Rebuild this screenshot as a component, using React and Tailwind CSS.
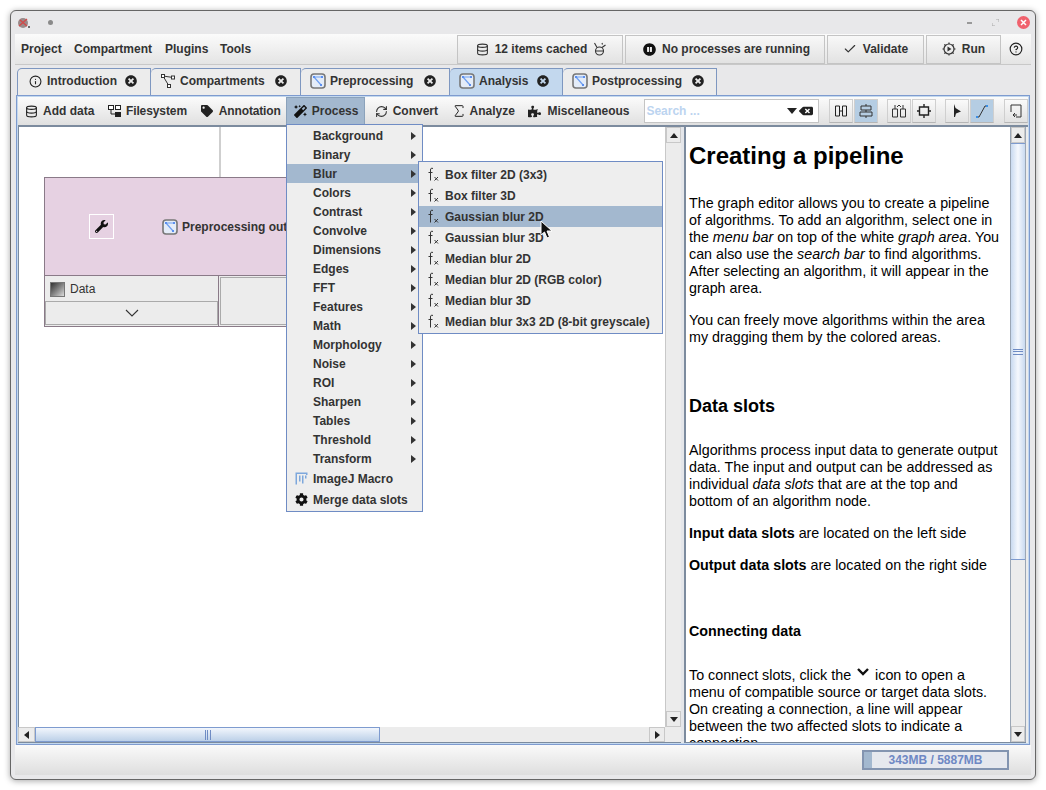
import { Database, RefreshCw, Sigma, Check, CircleHelp, Info } from "lucide-react"
import { FaMagic, FaTag, FaPuzzlePiece, FaCog, FaWrench, FaTimesCircle, FaPauseCircle, FaBackspace } from "react-icons/fa"

const font = { fontFamily: '"Liberation Sans", Arial, sans-serif' }

const PipelineIcon = ({ size = 16 }) => (
    <svg width={size} height={size} viewBox="0 0 16 16" className="shrink-0">
        <rect x="1" y="1" width="14" height="14" rx="3" fill="#e4ecf8" stroke="#777" strokeWidth="1.6" />
        <path d="M4 4 L12 4 M4 4 L11 12" fill="none" stroke="#6f9ff0" strokeWidth="1.2" />
        <rect x="3" y="3" width="2" height="2" fill="#5b8ff0" />
        <rect x="11" y="3" width="2" height="2" fill="#5b8ff0" />
        <rect x="10" y="11" width="2" height="2" fill="#5b8ff0" />
    </svg>
)

const CompartmentsIcon = () => (
    <svg width="14" height="14" viewBox="0 0 14 14" className="shrink-0">
        <path d="M2 2 L12 3.5 M2 2 L8 12" stroke="#333" strokeWidth="1" fill="none" />
        <rect x="0.5" y="0.5" width="3" height="3" fill="#fff" stroke="#333" />
        <rect x="10.5" y="2" width="3" height="3" fill="#fff" stroke="#333" />
        <rect x="6.5" y="10.5" width="3" height="3" fill="#fff" stroke="#333" />
    </svg>
)

const FilesystemIcon = () => (
    <svg width="13" height="13" viewBox="0 0 13 13" className="shrink-0">
        <rect x="0.5" y="0.5" width="5" height="4" fill="#fff" stroke="#222" />
        <rect x="7.5" y="0.5" width="5" height="4" fill="#fff" stroke="#222" />
        <path d="M3 5 V9 H7" fill="none" stroke="#222" />
        <rect x="7" y="7" width="6" height="5" fill="#222" />
    </svg>
)

const RunIcon = () => (
    <svg width="14" height="14" viewBox="0 0 14 14" className="shrink-0">
        <circle cx="7" cy="7" r="5" fill="none" stroke="#333" strokeWidth="1.2" />
        <path d="M7 0.5 V2 M7 12 V13.5 M0.5 7 H2 M12 7 H13.5 M2.4 2.4 L3.5 3.5 M10.5 10.5 L11.6 11.6 M2.4 11.6 L3.5 10.5 M10.5 3.5 L11.6 2.4" stroke="#333" strokeWidth="1.2" />
        <path d="M5.5 4.5 L9.5 7 L5.5 9.5 Z" fill="#333" />
    </svg>
)

// the little "cache" glyph next to the items count
const CacheIcon = () => (
    <svg width="14" height="14" viewBox="0 0 14 14" className="shrink-0">
        <circle cx="6.5" cy="9" r="4" fill="none" stroke="#333" strokeWidth="1.1" />
        <path d="M3 9 H10 M4 5.5 L1.5 1 M9 5.5 L12.5 3 M9 1 L9.5 2.5" fill="none" stroke="#333" strokeWidth="1.1" />
    </svg>
)

const FxIcon = () => (
    <svg width="12" height="15" viewBox="0 0 12 15" className="shrink-0">
        <path d="M6 1.5 C4.5 0.8 3.5 1.3 3.5 3 L3.5 13.5 M1.5 5.5 H5.5" fill="none" stroke="#333" strokeWidth="1" />
        <path d="M7.5 10 L11 13.5 M11 10 L7.5 13.5" stroke="#333" strokeWidth="1" />
    </svg>
)

const ImageJIcon = () => (
    <svg width="13" height="13" viewBox="0 0 13 13" className="shrink-0">
        <path d="M0.5 0.5 H12.5 V3 H11 V2 H2 V12.5 H0.5 Z" fill="#7da7dc" />
        <rect x="4" y="3.5" width="1.5" height="6" fill="#7da7dc" />
        <rect x="7" y="3.5" width="1.5" height="8" fill="#7da7dc" />
        <rect x="10" y="3.5" width="1.5" height="3" fill="#7da7dc" />
    </svg>
)

// small toolbar glyphs, drawn to fit the 24px square buttons
const layoutIcons = [
    <path key="a" d="M2.5 3 H6.5 V13 H2.5 Z M9.5 3 H13.5 V13 H9.5 Z M6.5 8 H9.5" fill="none" stroke="#222" />,
    <path key="b" d="M3 3 H13 V7 H3 Z M2 9 H14 V13 H2 Z M8 1 V3 M8 7 V9 M8 13 V15" fill="none" stroke="#333" />,
    <path key="c" d="M1.5 6 H6.5 V14 H1.5 Z M9.5 6 H14.5 V14 H9.5 Z M4 6 V2 M12 6 V2 M6 4 L8 2 L10 4" fill="none" stroke="#333" />,
    <path key="d" d="M3.5 4 H12.5 V12 H3.5 Z M8 1 V4 M8 12 V15 M1 8 H3.5 M12.5 8 H15" fill="none" stroke="#222" strokeWidth="1.4" />,
    <path key="e" d="M5 1 L6.5 5 L12 8.5 L7 10.5 L6 14 L5 14 Z" fill="#222" />,
    <g key="f"><path d="M3 14 H5 L11 3 H13" fill="none" stroke="#333" /><rect x="2" y="13" width="2" height="2" fill="#3a8fe8" /><rect x="12" y="2" width="2" height="2" fill="#3a8fe8" /></g>,
    <path key="g" d="M3 2 H13 V14 H8 M3 2 V9 M5 12 H9 M5 12 L7 10 M5 12 L7 14" fill="none" stroke="#333" />,
]

const IconButton = ({ idx, active, className = "" }) => (
    <div className={`w-[24px] h-[24px] flex items-center justify-center border border-[#cfcfcf] border-b-[#b5b5b5] ${active ? "bg-[#b5cde3]" : "bg-linear-to-b from-[#fafafa] to-[#e2e2e2]"} ${className}`}>
        <svg width="16" height="16" viewBox="0 0 16 16">{layoutIcons[idx]}</svg>
    </div>
)

const TopButton = ({ width, children }) => (
    <div className={`${width} h-[29px] flex items-center justify-center gap-[6px] border border-[#c4c4c4] bg-linear-to-b from-[#f8f8f8] to-[#e2e2e2] text-[12px] font-bold text-[#333]`}>
        {children}
    </div>
)

const tabs = [
    { name: "Introduction", w: "w-[134px]", icon: <Info size={13} color="#222" />, pl: "pl-[11px]", gap: "gap-[5px]", closeMl: "ml-[3px]" },
    { name: "Compartments", w: "w-[150px]", icon: <CompartmentsIcon />, pl: "pl-[10px]", gap: "gap-[5px]", closeMl: "ml-[5px]" },
    { name: "Preprocessing", w: "w-[149px]", icon: <PipelineIcon />, pl: "pl-[9px]", gap: "gap-[4px]", closeMl: "ml-[7px]" },
    { name: "Analysis", w: "w-[113px]", icon: <PipelineIcon />, pl: "pl-[9px]", gap: "gap-[4px]", closeMl: "ml-[5px]", active: true },
    { name: "Postprocessing", w: "w-[154px]", icon: <PipelineIcon />, pl: "pl-[9px]", gap: "gap-[4px]", closeMl: "ml-[6px]" },
]

const toolbarItems = [
    { name: "Add data", cls: "w-[83px] pl-[6px] gap-[5px]", icon: <Database size={13} color="#222" /> },
    { name: "Filesystem", cls: "w-[93px] pl-[6px] gap-[5px] tracking-[-0.1px]", icon: <FilesystemIcon /> },
    { name: "Annotation", cls: "w-[91px] pl-[6px] gap-[6px] tracking-[-0.15px]", icon: <FaTag size={12} color="#222" /> },
    { name: "Process", cls: "w-[79px] pl-[7px] gap-[5px] pb-[1px]", icon: <FaMagic size={13} color="#111" />, active: true },
    { name: "Convert", cls: "w-[81px] pl-[10px] gap-[5px]", icon: <RefreshCw size={13} color="#333" /> },
    { name: "Analyze", cls: "w-[76px] pl-[5px] gap-[3px]", icon: <Sigma size={16} color="#222" strokeWidth={1.5} /> },
    { name: "Miscellaneous", cls: "w-[121px] pl-[6px] gap-[7px]", icon: <FaPuzzlePiece size={13} color="#222" /> },
]

const processMenu = ["Background", "Binary", "Blur", "Colors", "Contrast", "Convolve", "Dimensions", "Edges", "FFT", "Features", "Math", "Morphology", "Noise", "ROI", "Sharpen", "Tables", "Threshold", "Transform"]
const blurMenu = ["Box filter 2D (3x3)", "Box filter 3D", "Gaussian blur 2D", "Gaussian blur 3D", "Median blur 2D", "Median blur 2D (RGB color)", "Median blur 3D", "Median blur 3x3 2D (8-bit greyscale)"]

const Arrow = ({ dir }) => {
    const d = { up: "M0 5 L4 0 L8 5 Z", down: "M0 0 L8 0 L4 5 Z", left: "M5 0 L5 8 L0 4 Z", right: "M0 0 L0 8 L5 4 Z" }[dir]
    const horizontal = dir === "left" || dir === "right"
    return (
        <svg width={horizontal ? 5 : 8} height={horizontal ? 8 : 5} viewBox={horizontal ? "0 0 5 8" : "0 0 8 5"} className="shrink-0">
            <path d={d} fill="#222" />
        </svg>
    )
}

const ScrollBtn = ({ dir, className = "" }) => (
    <div className={`flex items-center justify-center bg-[#ececec] border border-[#c8c8c8] ${className}`}>
        <Arrow dir={dir} />
    </div>
)

const App = () => {
    return (
        <div className="relative w-[1046px] h-[790px] bg-white p-[10px]" style={font}>
            <div className="w-[1026px] h-[770px] flex flex-col rounded-[6px] border border-[#666] bg-[#e8e8ea] shadow-[0_1px_6px_rgba(0,0,0,0.35)] px-[4px] pb-[4px]">

                {/* title bar */}
                <div className="h-[23px] shrink-0 flex items-center relative">
                    <svg width="14" height="14" viewBox="0 0 14 14" className="ml-[2px]">
                        <circle cx="6" cy="7" r="5" fill="#9a8a8a" />
                        <path d="M2 10 L10 3 M3 4 L10 10" stroke="#d24a4a" strokeWidth="1.4" />
                        <circle cx="12" cy="11" r="1" fill="#444" />
                    </svg>
                    <div className="ml-[17px] w-[5px] h-[5px] rounded-full bg-[#8a8a8a]" />
                    <div className="ml-auto flex items-center">
                        <div className="w-[5px] h-[2px] bg-[#999]" />
                        <svg width="7" height="7" viewBox="0 0 7 7" className="ml-[20px]">
                            <path d="M4 0 H7 V3 M0 4 V7 H3" fill="none" stroke="#aaa" />
                        </svg>
                        <div className="ml-[18px] mr-[1px] w-[13px] h-[13px] rounded-full bg-[#f0616d] flex items-center justify-center">
                            <svg width="7" height="7" viewBox="0 0 7 7"><path d="M1 1 L6 6 M6 1 L1 6" stroke="#fff" strokeWidth="1.5" /></svg>
                        </div>
                    </div>
                </div>

                {/* menu bar */}
                <div className="h-[31px] shrink-0 flex items-center bg-linear-to-b from-[#fbfbfb] to-[#e4e4e4] border-b border-[#c8c8c8] text-[12px] font-bold text-[#333] pl-[6px]">
                    <span className="w-[53px]">Project</span>
                    <span className="w-[91px]">Compartment</span>
                    <span className="w-[55px]">Plugins</span>
                    <span className="w-[237px]">Tools</span>
                    <div className="flex items-center gap-[2px]">
                        <TopButton width="w-[166px]"><Database size={13} color="#333" className="ml-[3px]" />12 items cached<CacheIcon /></TopButton>
                        <TopButton width="w-[200px]"><FaPauseCircle size={13} color="#111" className="ml-[3px]" />No processes are running</TopButton>
                        <TopButton width="w-[97px]"><Check size={14} color="#333" />Validate</TopButton>
                        <TopButton width="w-[75px]"><RunIcon />Run</TopButton>
                    </div>
                    <CircleHelp size={14} color="#222" className="ml-[8px]" />
                </div>

                {/* tab strip */}
                <div className="h-[27px] shrink-0 mt-[3px] flex pl-[2px] items-stretch">
                    {tabs.map(tab => (
                        <div key={tab.name} className={`${tab.w} ${tab.pl} ${tab.gap} flex items-center pb-[2px] border-t border-r border-l-0 first:border-l border-[#7e97c0] rounded-tl-[5px] text-[12px] font-bold text-[#333] ${tab.active ? "bg-[#c3d8ee]" : "bg-[#ececec]"}`}>
                            {tab.icon}
                            <span>{tab.name}</span>
                            <FaTimesCircle size={12} color="#222" className={tab.closeMl} />
                        </div>
                    ))}
                </div>

                {/* tab content */}
                <div className="flex-1 min-h-0 mx-[1px] flex flex-col border border-[#7e9bcf] bg-[#c3d8ee] p-[1px]">
                    <div className="h-[28px] shrink-0 flex items-center bg-linear-to-b from-[#fbfbfb] to-[#e0e0e0] text-[12px] font-bold text-[#333] pl-[1px]">
                        {toolbarItems.map(item => (
                            <div key={item.name} className={`${item.cls} h-full flex items-center ${item.active ? "bg-[#a3b8cf] border border-[#8ba2bb] border-b-0" : ""}`}>
                                {item.icon}
                                <span>{item.name}</span>
                            </div>
                        ))}
                        <div className="w-[175px] h-[24px] ml-[2px] flex items-center bg-white border border-[#c4c4c4] pr-[5px]">
                            <span className="pl-[1px] text-[12px] font-bold text-[#bcd4f0]">Search ...</span>
                            <svg width="10" height="6" viewBox="0 0 10 6" className="ml-auto"><path d="M0 0 H10 L5 6 Z" fill="#222" /></svg>
                            <FaBackspace size={14} color="#222" className="ml-[2px]" />
                        </div>
                        <IconButton idx={0} className="ml-[10px]" />
                        <IconButton idx={1} active className="ml-[1px]" />
                        <IconButton idx={2} className="ml-[9px]" />
                        <IconButton idx={3} className="ml-[1px]" />
                        <IconButton idx={4} className="ml-[9px]" />
                        <IconButton idx={5} active className="ml-[1px]" />
                        <IconButton idx={6} className="ml-[10px]" />
                    </div>

                    <div className="flex-1 min-h-0 flex border-t-2 border-[#7c8b9e] bg-[#ececec]">
                        {/* graph area */}
                        <div className="w-[663px] shrink-0 flex flex-col">
                            <div className="flex-1 min-h-0 flex">
                                <div className="relative flex-1 bg-white border-l border-[#7c8b9e] overflow-hidden">
                                    <div className="absolute left-[200px] top-0 w-[2px] h-[50px] bg-[#cfcfcf]" />
                                    <div className="absolute left-[25px] top-[50px] w-[350px] h-[150px] flex flex-col border border-[#8a7a88] bg-[#ececec]">
                                        <div className="h-[98px] shrink-0 flex items-center bg-[#e6d1e2] border-b border-[#8a7a88] pl-[44px]">
                                            <div className="w-[25px] h-[25px] flex items-center justify-center border border-white">
                                                <FaWrench size={13} color="#111" />
                                            </div>
                                            <div className="ml-[48px] flex items-center gap-[4px] text-[12px] font-bold text-[#333]">
                                                <PipelineIcon />
                                                <span>Preprocessing output</span>
                                            </div>
                                        </div>
                                        <div className="flex-1 min-h-0 flex">
                                            <div className="w-[174px] border-r border-[#8a7a88] flex flex-col pt-[1px] pb-[1px]">
                                                <div className="h-[24px] shrink-0 flex items-center gap-[5px] pl-[5px] text-[12px] text-[#333]">
                                                    <div className="w-[15px] h-[15px] border border-[#777] bg-linear-to-br from-[#333] to-[#ddd]" />
                                                    Data
                                                </div>
                                                <div className="flex-1 min-h-0 flex items-center justify-center border border-[#aaa]">
                                                    <svg width="14" height="8" viewBox="0 0 14 8"><path d="M1 1 L7 7 L13 1" fill="none" stroke="#333" strokeWidth="1.1" /></svg>
                                                </div>
                                            </div>
                                            <div className="flex-1 m-[1px] border border-[#aaa]" />
                                        </div>
                                    </div>
                                </div>
                                <div className="w-[16px] shrink-0 flex flex-col bg-[#ececec] border-l border-[#c8c8c8]">
                                    <ScrollBtn dir="up" className="h-[16px]" />
                                    <div className="flex-1" />
                                    <ScrollBtn dir="down" className="h-[16px]" />
                                </div>
                            </div>
                            <div className="h-[16px] shrink-0 flex bg-[#ececec] border-b border-[#7c8b9e]">
                                <ScrollBtn dir="left" className="w-[17px]" />
                                <div className="w-[345px] flex items-center justify-center border border-[#7e9bcf] bg-linear-to-b from-[#f2f6fc] to-[#bcd0e8]">
                                    <div className="w-[6px] h-[10px] border-x border-[#6f8cc4] flex justify-center"><div className="w-px bg-[#6f8cc4]" /></div>
                                </div>
                                <div className="flex-1" />
                                <ScrollBtn dir="right" className="w-[16px]" />
                                <div className="w-[16px]" />
                            </div>
                        </div>

                        {/* divider */}
                        <div className="w-[5px] shrink-0 bg-[#e4e6ea] border-r-2 border-[#7c8b9e]" />

                        {/* documentation pane */}
                        <div className="flex-1 min-w-0 flex border-b border-[#7c8b9e] mr-[2px]">
                            <div className="flex-1 min-w-0 bg-white overflow-hidden pl-[3px] pr-[6px] text-[14.3px] leading-[17px] text-black">
                                <h1 className="text-[24px] leading-[28px] font-bold mt-[15px]">Creating a pipeline</h1>
                                <p className="mt-[25px]">The graph editor allows you to create a pipeline of algorithms. To add an algorithm, select one in the <i>menu bar</i> on top of the white <i>graph area</i>. You can also use the <i>search bar</i> to find algorithms. After selecting an algorithm, it will appear in the graph area.</p>
                                <p className="mt-[15px]">You can freely move algorithms within the area my dragging them by the colored areas.</p>
                                <h2 className="text-[18px] leading-[22px] font-bold mt-[49px]">Data slots</h2>
                                <p className="mt-[25px]">Algorithms process input data to generate output data. The input and output can be addressed as individual <i>data slots</i> that are at the top and bottom of an algorithm node.</p>
                                <p className="mt-[15px]"><b>Input data slots</b> are located on the left side</p>
                                <p className="mt-[15px]"><b>Output data slots</b> are located on the right side</p>
                                <h3 className="font-bold mt-[49px]">Connecting data</h3>
                                <p className="mt-[27px]">To connect slots, click the <svg width="14" height="10" viewBox="0 0 14 10" className="inline align-[3px] mx-[1px]"><path d="M2 2 L7 7 L12 2" fill="none" stroke="#111" strokeWidth="2.4" /></svg> icon to open a menu of compatible source or target data slots. On creating a connection, a line will appear between the two affected slots to indicate a connection.</p>
                            </div>
                            <div className="w-[16px] shrink-0 flex flex-col bg-[#ececec] border-x border-[#9aa6b5]">
                                <ScrollBtn dir="up" className="h-[16px]" />
                                <div className="h-[417px] flex items-center justify-center border-y border-[#7e9bcf] bg-linear-to-r from-[#c9daf0] via-[#f5f8fd] to-[#c9daf0]">
                                    <div className="w-[10px] h-[6px] border-y border-[#6f8cc4] flex items-center"><div className="h-px w-full bg-[#6f8cc4]" /></div>
                                </div>
                                <div className="flex-1" />
                                <ScrollBtn dir="down" className="h-[16px]" />
                            </div>
                        </div>
                    </div>
                </div>

                {/* status bar */}
                <div className="h-[30px] shrink-0 flex items-center justify-end bg-linear-to-b from-[#fafafa] to-[#dedede] pr-[22px]">
                    <div className="relative w-[147px] h-[20px] flex items-center justify-center border-2 border-[#8394b0] bg-[#e6e8ee]">
                        <div className="absolute left-0 top-0 bottom-0 w-[8px] bg-[#a3b8cf]" />
                        <span className="relative text-[12px] font-bold text-[#6f88c4]">343MB / 5887MB</span>
                    </div>
                </div>
            </div>

            {/* Process menu */}
            <div className="absolute left-[286px] top-[124px] w-[137px] h-[388px] border border-[#6f8cc4] bg-[#eeeeee] pt-[1px] text-[12px] font-bold text-[#333]">
                {processMenu.map(name => (
                    <div key={name} className={`h-[19px] flex items-center pl-[26px] pr-[6px] ${name === "Blur" ? "bg-[#a3b8cf]" : ""}`}>
                        <span>{name}</span>
                        <svg width="5" height="8" viewBox="0 0 5 8" className="ml-auto"><path d="M0 0 L0 8 L5 4 Z" fill="#333" /></svg>
                    </div>
                ))}
                <div className="h-[21px] flex items-center pl-[8px] gap-[5px]">
                    <ImageJIcon />
                    <span>ImageJ Macro</span>
                </div>
                <div className="h-[21px] flex items-center pl-[8px] gap-[5px]">
                    <FaCog size={13} color="#111" />
                    <span>Merge data slots</span>
                </div>
            </div>

            {/* Blur submenu */}
            <div className="absolute left-[418px] top-[161px] w-[245px] h-[173px] border border-[#6f8cc4] bg-[#eeeeee] pt-[2px] text-[12px] font-bold text-[#333]">
                {blurMenu.map(name => (
                    <div key={name} className={`h-[21px] flex items-center pl-[8px] gap-[6px] ${name === "Gaussian blur 2D" ? "bg-[#a3b8cf]" : ""}`}>
                        <FxIcon />
                        <span>{name}</span>
                    </div>
                ))}
            </div>

            {/* mouse pointer */}
            <svg width="13" height="20" viewBox="0 0 13 20" className="absolute left-[540px] top-[220px]">
                <path d="M1 1 L1 15 L4.5 12 L7 18 L9.5 17 L7 11 L12 11 Z" fill="#111" stroke="#fff" strokeWidth="1" />
            </svg>
        </div>
    )
}

export default App
